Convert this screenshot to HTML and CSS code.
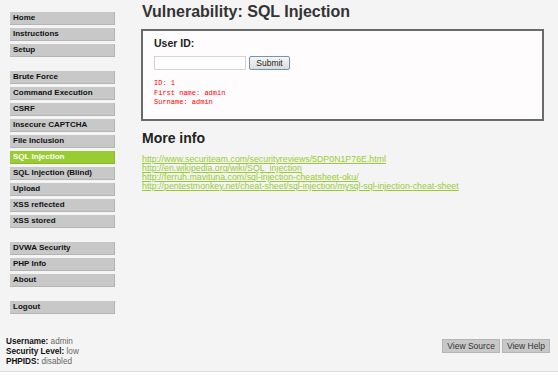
FILE: index.html
```html
<!DOCTYPE html>
<html lang="en">
<head>
    <meta charset="UTF-8">
    <title>Damn Vulnerable Web App (DVWA) :: Vulnerability: SQL Injection</title>
    <link rel="stylesheet" href="styles.css">
</head>
<body>
<div class="page">
    <div class="sidebar">
        <div class="menu">
            <ul class="menu-block">
                <li><a href="#">Home</a></li>
                <li><a href="#">Instructions</a></li>
                <li><a href="#">Setup</a></li>
            </ul>
            <ul class="menu-block">
                <li><a href="#">Brute Force</a></li>
                <li><a href="#">Command Execution</a></li>
                <li><a href="#">CSRF</a></li>
                <li><a href="#">Insecure CAPTCHA</a></li>
                <li><a href="#">File Inclusion</a></li>
                <li class="selected"><a href="#">SQL Injection</a></li>
                <li><a href="#">SQL Injection (Blind)</a></li>
                <li><a href="#">Upload</a></li>
                <li><a href="#">XSS reflected</a></li>
                <li><a href="#">XSS stored</a></li>
            </ul>
            <ul class="menu-block">
                <li><a href="#">DVWA Security</a></li>
                <li><a href="#">PHP Info</a></li>
                <li><a href="#">About</a></li>
            </ul>
            <ul class="menu-block">
                <li><a href="#">Logout</a></li>
            </ul>
        </div>
        <div class="userinfo">
            <div><b>Username:</b> admin</div>
            <div><b>Security Level:</b> low</div>
            <div><b>PHPIDS:</b> disabled</div>
        </div>
    </div>

    <div class="main">
        <h1>Vulnerability: SQL Injection</h1>

        <div class="vulnerable-code">
            <form class="id-form" action="#" method="get">
                <p class="form-label">User ID:</p>
                <div class="form-row">
                    <input type="text" name="id" class="id-input">
                    <input type="submit" value="Submit" class="submit-btn">
                </div>
            </form>
            <pre class="result">ID: 1
First name: admin
Surname: admin</pre>
        </div>

        <h2>More info</h2>
        <ul class="links">
            <li><a href="#">http://www.securiteam.com/securityreviews/5DP0N1P76E.html</a></li>
            <li><a href="#">http://en.wikipedia.org/wiki/SQL_injection</a></li>
            <li><a href="#">http://ferruh.mavituna.com/sql-injection-cheatsheet-oku/</a></li>
            <li><a href="#">http://pentestmonkey.net/cheat-sheet/sql-injection/mysql-sql-injection-cheat-sheet</a></li>
        </ul>

        <div class="main-footer">
            <button class="popup-btn" type="button">View Source</button>
            <button class="popup-btn" type="button">View Help</button>
        </div>
    </div>
</div>
</body>
</html>
```

FILE: styles.css
```css
body {
    margin: 0;
    background: #fff;
    font-family: "Liberation Sans", Arial, sans-serif;
    color: #222;
}

.page {
    display: flex;
    height: 372px;
    box-sizing: border-box;
    background: #f4f4f4;
    border-bottom: 1px solid #dcdcdc;
}

/* левое меню */
.sidebar {
    width: 141px;
    display: flex;
    flex-direction: column;
    padding: 12px 0 4px 0;
    box-sizing: border-box;
}

.menu {
    padding-left: 10px;
}

.menu-block {
    list-style: none;
    display: flex;
    flex-direction: column;
    gap: 3px;
    margin: 0 0 14px 0;
    padding: 0;
    width: 105px;
}

.menu-block li {
    height: 13px;
    background: #c8c8c8;
    border-right: 1px solid #b4b4b4;
    border-bottom: 1px solid #b4b4b4;
    box-sizing: border-box;
}

.menu-block a {
    display: block;
    padding-left: 3px;
    font-size: 8px;
    line-height: 12px;
    font-weight: bold;
    color: #111;
    text-decoration: none;
    white-space: nowrap;
}

.menu-block li.selected {
    background: #99cc33;
    border-color: #8ab82c;
}

.menu-block li.selected a {
    color: #fff;
}

.userinfo {
    margin-top: auto;
    padding-left: 6px;
    font-size: 8.2px;
    line-height: 10px;
    color: #666;
}

.userinfo b {
    color: #111;
}

/* основная часть */
.main {
    flex: 1;
    display: flex;
    flex-direction: column;
    padding-right: 8px;
}

h1 {
    margin: 2px 0 7px 1px;
    font-size: 16px;
    line-height: 20px;
    font-weight: bold;
    color: #333;
}

.vulnerable-code {
    width: 403px;
    height: 92px;
    box-sizing: border-box;
    border: 2px solid #6a6a6a;
    background: #fffcfe;
    padding: 5px 11px 0 11px;
}

.form-label {
    margin: 0;
    font-size: 10.5px;
    line-height: 14px;
    font-weight: bold;
    color: #222;
}

.form-row {
    display: flex;
    gap: 3px;
    margin-top: 6px;
}

.id-input {
    width: 92px;
    height: 14px;
    box-sizing: border-box;
    margin: 0;
    border: 1px solid #d4d4d4;
    background: #fff;
}

.submit-btn {
    width: 41px;
    height: 14px;
    box-sizing: border-box;
    margin: 0;
    padding: 0;
    border: 1px solid #6f94b8;
    border-radius: 2px;
    background: linear-gradient(#f6f6f6, #dcdcdc);
    font-family: "Liberation Sans", Arial, sans-serif;
    font-size: 8.5px;
    line-height: 12px;
    color: #222;
}

.result {
    margin: 9px 0 0 0;
    font-family: "Liberation Mono", "Courier New", monospace;
    font-size: 7px;
    line-height: 9.5px;
    color: #ff0000;
}

h2 {
    margin: 8px 0 0 1px;
    font-size: 14px;
    line-height: 18px;
    font-weight: bold;
    color: #222;
}

.links {
    list-style: none;
    margin: 8px 0 0 1px;
    padding: 0;
    font-size: 8.8px;
    line-height: 9px;
}

.links a {
    color: #99cc33;
}

.main-footer {
    margin-top: auto;
    margin-bottom: 18px;
    display: flex;
    justify-content: flex-end;
    gap: 2px;
}

.popup-btn {
    height: 14px;
    margin: 0;
    padding: 0 4px;
    border: 1px solid #b5b5b5;
    background: #c8c8c8;
    font-family: "Liberation Sans", Arial, sans-serif;
    font-size: 8.5px;
    line-height: 12px;
    color: #333;
}
```
